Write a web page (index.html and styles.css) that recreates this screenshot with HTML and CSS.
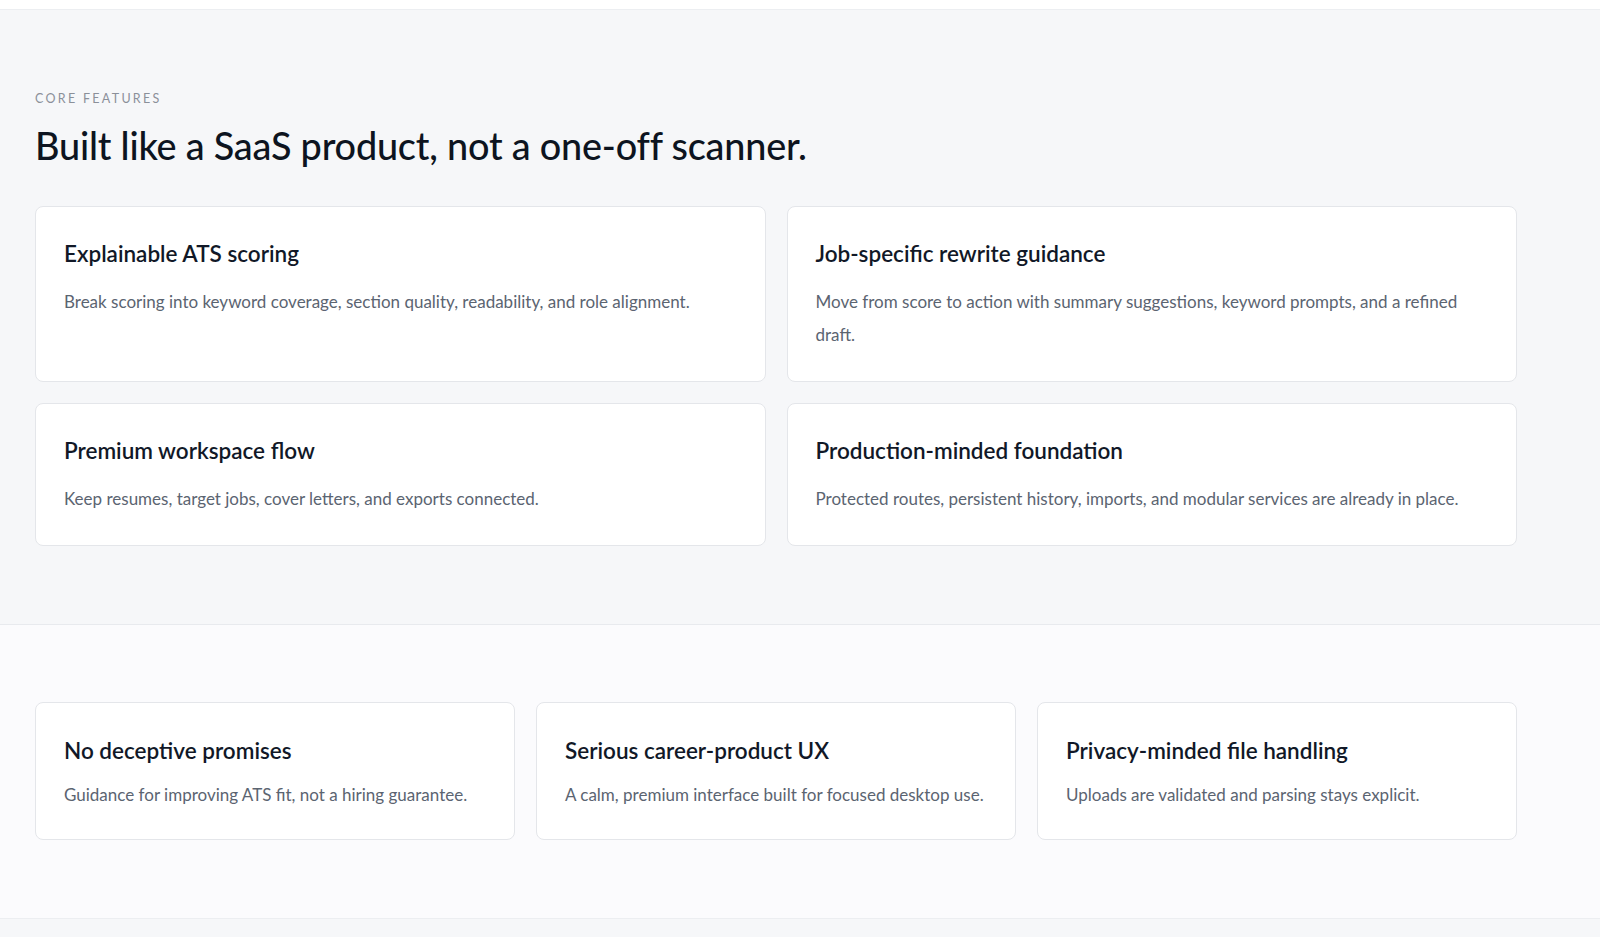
FILE: index.html
```html
<!DOCTYPE html>
<html lang="en">
<head>
<meta charset="utf-8">
<title>Core features</title>
<link rel="stylesheet" href="styles.css">
</head>
<body>
<div class="topbar"></div>
<section class="features">
  <p class="eyebrow">CORE FEATURES</p>
  <h2 class="heading">Built like a SaaS product, not a one-off scanner.</h2>
  <div class="grid two">
    <article class="card">
      <h3 class="card-title">Explainable ATS scoring</h3>
      <p class="card-text">Break scoring into keyword coverage, section quality, readability, and role alignment.</p>
    </article>
    <article class="card">
      <h3 class="card-title">Job-specific rewrite guidance</h3>
      <p class="card-text">Move from score to action with summary suggestions, keyword prompts, and a refined draft.</p>
    </article>
    <article class="card">
      <h3 class="card-title">Premium workspace flow</h3>
      <p class="card-text">Keep resumes, target jobs, cover letters, and exports connected.</p>
    </article>
    <article class="card">
      <h3 class="card-title">Production-minded foundation</h3>
      <p class="card-text">Protected routes, persistent history, imports, and modular services are already in place.</p>
    </article>
  </div>
</section>
<section class="principles">
  <div class="grid three">
    <article class="card small">
      <h3 class="card-title">No deceptive promises</h3>
      <p class="card-text">Guidance for improving ATS fit, not a hiring guarantee.</p>
    </article>
    <article class="card small">
      <h3 class="card-title">Serious career-product UX</h3>
      <p class="card-text">A calm, premium interface built for focused desktop use.</p>
    </article>
    <article class="card small">
      <h3 class="card-title">Privacy-minded file handling</h3>
      <p class="card-text">Uploads are validated and parsing stays explicit.</p>
    </article>
  </div>
</section>
<div class="bottom"></div>
</body>
</html>
```
FILE: styles.css
```css
* { box-sizing: border-box; }
html, body { margin: 0; padding: 0; }
body {
  font-family: "Lato", "Open Sans", sans-serif;
  background: #f6f7f9;
  color: #111827;
  width: 1600px;
}
.topbar {
  height: 10px;
  background: #ffffff;
  border-bottom: 1px solid #eceef1;
}
.features {
  background: #f6f7f9;
  padding: 81px 83px 78px 35px;
  border-bottom: 1px solid #e8eaee;
}
.eyebrow {
  margin: 0;
  font-size: 12.5px;
  line-height: 16px;
  letter-spacing: 2.3px;
  color: #8b9099;
}
.heading {
  margin: 16px 0 0;
  font-size: 37.8px;
  line-height: 46px;
  font-weight: 500;
  color: #0d1420;
  letter-spacing: -0.2px;
}
.grid {
  display: grid;
  gap: 21px 21px;
}
.grid.two {
  margin-top: 37px;
  grid-template-columns: 1fr 1fr;
}
.grid.three {
  grid-template-columns: 1fr 1fr 1fr;
  gap: 21px;
}
.card {
  background: #ffffff;
  border: 1px solid #e4e6ea;
  border-radius: 8px;
  padding: 32px 29px 30px 28px;
}
.card-title {
  margin: 0;
  font-size: 22.5px;
  line-height: 30px;
  font-weight: 600;
  color: #111827;
}
.card-text {
  margin: 16px 0 0;
  font-size: 17px;
  line-height: 33px;
  color: #5b6471;
}
.principles {
  background: #fbfbfd;
  padding: 77px 83px 78px 35px;
  border-bottom: 1px solid #eceef1;
}
.card.small {
  padding: 33px 29px 30px 28px;
}
.card.small .card-text {
  margin-top: 15px;
  line-height: 28px;
}
.bottom {
  height: 40px;
  background: #f6f7f9;
}
```
